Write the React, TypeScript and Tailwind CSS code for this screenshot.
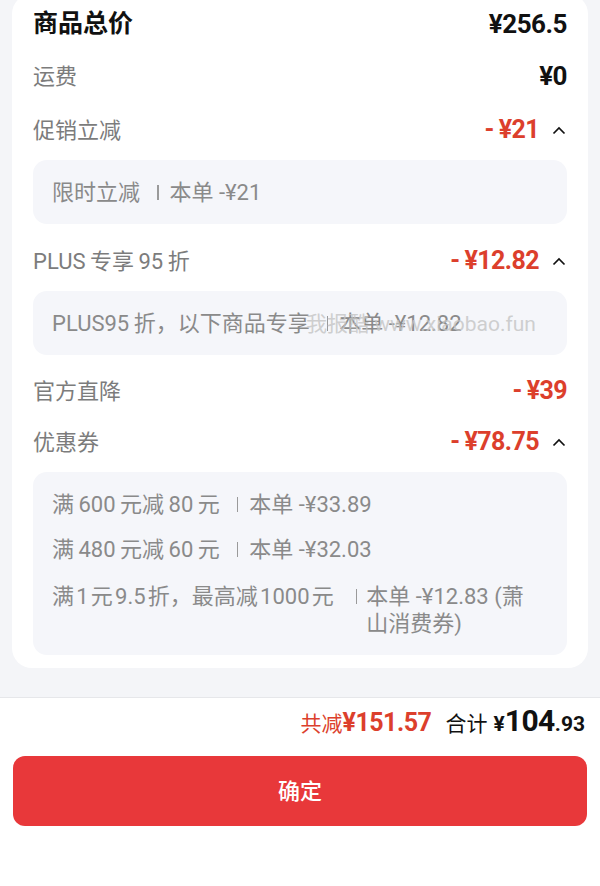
const RED = "text-[#dc3f2c]";
const T = "\u2009";
const H = "\u200A";

function Caret() {
  return (
    <svg width="14" height="9" viewBox="0 0 14 9" className="ml-[13px] mr-[1px]">
      <path d="M1.5 7.5 L7 2 L12.5 7.5" fill="none" stroke="#111" strokeWidth="1.7" />
    </svg>
  );
}

function Bar({ className }: { className?: string }) {
  return (
    <span
      className={
        "inline-block shrink-0 w-[1.5px] h-[15px] bg-[#9a9a9a] " + (className ?? "ml-[17px] mr-[11px]")
      }
    />
  );
}

type RowProps = {
  label: string;
  value: string;
  minus?: boolean;
  caret?: boolean;
  className?: string;
};

function Row({ label, value, minus, caret, className }: RowProps) {
  return (
    <div className={"flex items-center justify-between " + (className ?? "")}>
      <span className="text-[22px] text-[#7c7c7c]">{label}</span>
      <span className="flex items-center">
        {minus ? (
          <span className={"text-[25px] font-bold tracking-[-0.6px] " + RED}>
            -<span className="ml-[5px]">{value}</span>
          </span>
        ) : (
          <span className="text-[26px] font-bold text-[#111] tracking-[-0.5px]">{value}</span>
        )}
        {caret && <Caret />}
      </span>
    </div>
  );
}

export default function App() {
  return (
    <div className="min-h-[886px] bg-[#f4f5f8] flex flex-col font-['Roboto','Noto_Sans_CJK_SC',sans-serif]">
      <div className="px-[12px]">
        <div className="-mt-[6px] bg-white rounded-[20px] px-[21px] pt-[5px] pb-[13px]">
          <div className="flex items-center justify-between h-[50px]">
            <span className="text-[25px] font-bold text-[#111]">商品总价</span>
            <span className="text-[26px] font-bold text-[#111] tracking-[-0.5px]">¥256.5</span>
          </div>
          <Row label="运费" value="¥0" className="h-[54px]" />
          <Row label="促销立减" value="¥21" minus caret className="h-[54px]" />
          <div className="mt-[3px] h-[64px] rounded-[14px] bg-[#f5f6fa] px-[19px] flex items-center text-[22px] text-[#8a8a8a]">
            <span>限时立减</span>
            <Bar />
            <span>本单 -¥21</span>
          </div>
          <Row label={`PLUS${T}专享${T}95${T}折`} value="¥12.82" minus caret className="mt-[12px] h-[50px]" />
          <div className="relative mt-[5px] h-[64px] rounded-[14px] bg-[#f5f6fa] px-[19px] flex items-center text-[22px] text-[#8a8a8a]">
            <span>{`PLUS95${T}折，以下商品专享`}</span>
            <Bar />
            <span>本单 -¥12.82</span>
            <span className="absolute left-[273px] top-[18px] text-[21px] text-[#c4c4c4]/80">我报酷 www.xiaobao.fun</span>
          </div>
          <Row label="官方直降" value="¥39" minus className="mt-[11px] h-[50px]" />
          <Row label="优惠券" value="¥78.75" minus caret className="h-[52px]" />
          <div className="mt-[4px] rounded-[14px] bg-[#f5f6fa] px-[19px] pt-[19px] pb-[18px] flex flex-col text-[22px] leading-[27px] text-[#8a8a8a]">
            <div className="flex items-center">
              <span>{`满${T}600${T}元减${T}80${T}元`}</span>
              <Bar />
              <span>本单 -¥33.89</span>
            </div>
            <div className="mt-[18px] flex items-center">
              <span>{`满${T}480${T}元减${T}60${T}元`}</span>
              <Bar />
              <span>本单 -¥32.03</span>
            </div>
            <div className="mt-[20px] flex items-start">
              <span className="shrink-0">{`满${H}1${H}元${H}9.5${H}折，最高减${H}1000${H}元`}</span>
              <Bar className="ml-[22px] mr-[9px] mt-[6px]" />
              <span className="flex-1 min-w-0 mr-[12px]">本单 -¥12.83 (萧山消费券)</span>
            </div>
          </div>
        </div>
      </div>

      <div className="mt-[29px] flex-1 bg-white border-t border-[#e6e7ea]">
        <div className="flex items-baseline justify-end h-[52px] pt-0 pr-[15px]">
          <span className={"text-[21px] " + RED}>共减</span>
          <span className={"text-[25px] font-bold tracking-[-0.5px] " + RED}>¥151.57</span>
          <span className="ml-[14px] text-[21px] text-[#111]">合计</span>
          <span className="ml-[6px] text-[21px] font-bold text-[#111]">¥</span>
          <span className="text-[30px] font-bold text-[#111] tracking-[-0.5px]">104</span>
          <span className="text-[21px] font-bold text-[#111]">.93</span>
        </div>
        <div className="mx-[13px] mt-[6px] h-[70px] rounded-[12px] bg-[#e8383a] flex items-center justify-center">
          <span className="text-[22px] font-medium text-white">确定</span>
        </div>
      </div>
    </div>
  );
}
